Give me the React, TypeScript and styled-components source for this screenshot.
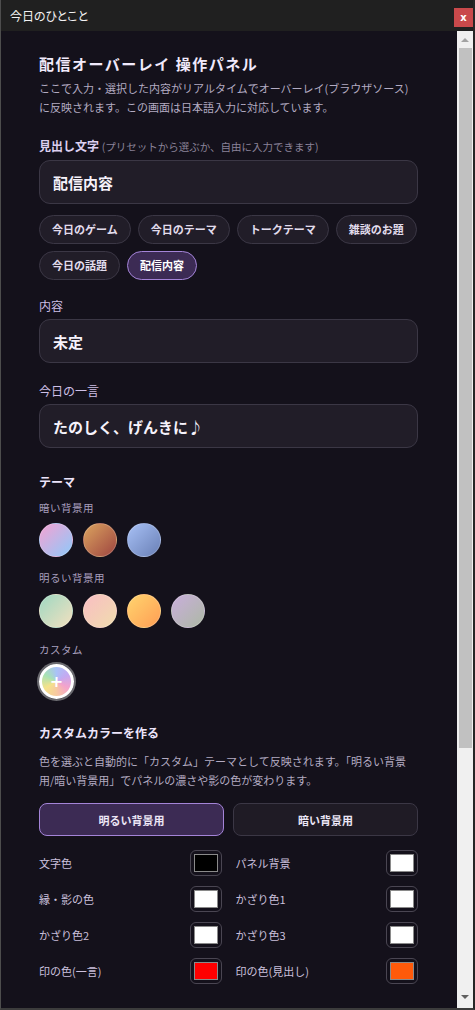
import React from "react";
import styled, { createGlobalStyle } from "styled-components";

const GlobalStyle = createGlobalStyle`
  html, body {
    margin: 0;
    padding: 0;
    background: #14111b;
  }
  body {
    font-family: "Noto Sans CJK JP", "Noto Sans", sans-serif;
  }
  * {
    box-sizing: border-box;
  }
`;

/**
 * Window chrome
 */

const Window = styled.div`
  width: 475px;
  height: 1010px;
  display: flex;
  flex-direction: column;
  background: #14111b;
  border-left: 1px solid #4d4d4d;
  border-right: 2px solid #262626;
  border-bottom: 2px solid #3c3c3c;
  overflow: hidden;
`;

const TitleBar = styled.div`
  height: 31px;
  flex-shrink: 0;
  display: flex;
  justify-content: space-between;
  align-items: flex-start;
  background: #202020;
  padding-left: 9px;
`;

const WindowTitle = styled.span`
  line-height: 31px;
  font-size: 12px;
  color: #f2f2f2;
  font-feature-settings: "palt";
`;

const CloseButton = styled.button`
  margin-top: 8px;
  width: 19px;
  height: 19px;
  padding: 0;
  border: none;
  background: #c9494b;
  color: #fff;
  font-family: "DejaVu Sans", sans-serif;
  font-size: 10px;
  font-weight: 700;
  line-height: 19px;
`;

const Body = styled.div`
  flex: 1;
  min-height: 0;
  display: flex;
`;

const Content = styled.main`
  flex: 1;
  overflow: hidden;
  padding: 22px 39px 0 38px;
`;

const ScrollTrack = styled.div`
  width: 16px;
  flex-shrink: 0;
  display: flex;
  flex-direction: column;
  background: #f0f0f0;
`;

const ScrollArrow = styled.div<{ $down?: boolean; $dim?: boolean }>`
  height: 17px;
  display: flex;
  align-items: center;
  justify-content: center;

  &::before {
    content: "";
    border-left: 4px solid transparent;
    border-right: 4px solid transparent;
    ${({ $down, $dim }) =>
      $down
        ? `border-top: 4px solid ${$dim ? "#a3a3a3" : "#606060"};`
        : `border-bottom: 4px solid ${$dim ? "#a3a3a3" : "#606060"};`}
  }
`;

const ScrollThumb = styled.div`
  height: 700px;
  margin: 0 1px 0 2px;
  background: #c1c1c1;
`;

const ScrollSpacer = styled.div<{ $size?: number }>`
  flex: ${({ $size }) => ($size ? `0 0 ${$size}px` : "1")};
`;

/**
 * Panel parts
 */

const Heading = styled.h1`
  margin: 0;
  font-size: 15px;
  line-height: 22px;
  font-weight: 700;
  letter-spacing: 1.5px;
  color: #f1eafc;
`;

const Lead = styled.p<{ $top?: number }>`
  margin: ${({ $top }) => $top ?? 4}px 0 0;
  font-size: 11px;
  line-height: 19px;
  color: #b3abc2;
`;

const FieldLabel = styled.div<{ $top: number; $strong?: boolean }>`
  margin: ${({ $top }) => $top}px 0 4px;
  font-size: 12px;
  line-height: 18px;
  font-weight: ${({ $strong }) => ($strong ? 700 : 400)};
  color: ${({ $strong }) => ($strong ? "#dccff0" : "#cdbfe6")};
`;

const Hint = styled.span`
  font-size: 10.5px;
  font-weight: 400;
  color: #8a8298;
`;

const TextInput = styled.input`
  display: block;
  width: 100%;
  height: 44px;
  padding: 0 13px;
  border-radius: 11px;
  border: 1px solid #3b3745;
  background: #211d28;
  color: #f6f2fb;
  font-family: "Noto Sans CJK JP", "Noto Sans", sans-serif;
  font-size: 15px;
  font-weight: 700;
  outline: none;
`;

const ChipRow = styled.div`
  display: flex;
  flex-wrap: wrap;
  gap: 7px;
  margin-top: 11px;
`;

const Chip = styled.button<{ $active?: boolean }>`
  height: 29px;
  padding: 0 12px;
  border-radius: 999px;
  border: 1px solid ${({ $active }) => ($active ? "#a484d8" : "#3b3745")};
  background: ${({ $active }) => ($active ? "#3c2b54" : "#211d28")};
  color: ${({ $active }) => ($active ? "#ffffff" : "#e2dcec")};
  font-family: "Noto Sans CJK JP", "Noto Sans", sans-serif;
  font-size: 11px;
  font-weight: 700;
  line-height: 27px;
`;

const SectionTitle = styled.h2<{ $top: number }>`
  margin: ${({ $top }) => $top}px 0 0;
  font-size: 12px;
  line-height: 18px;
  font-weight: 700;
  color: #ece4fa;
`;

const SubLabel = styled.div<{ $top: number; $bottom: number }>`
  margin: ${({ $top }) => $top}px 0 ${({ $bottom }) => $bottom}px;
  font-size: 10.5px;
  line-height: 18px;
  letter-spacing: 0.5px;
  color: #a79fbd;
`;

const SwatchRow = styled.div`
  display: flex;
  gap: 10px;
`;

const ThemeCircle = styled.button<{ $from: string; $to: string }>`
  width: 34px;
  height: 34px;
  padding: 0;
  border-radius: 50%;
  border: 1px solid rgba(255, 255, 255, 0.18);
  background: linear-gradient(135deg, ${({ $from }) => $from}, ${({ $to }) => $to});
`;

const CustomCircle = styled.button`
  width: 35px;
  height: 35px;
  padding: 0;
  border-radius: 50%;
  border: 3px solid #ffffff;
  box-shadow: 0 0 0 2px #6a6a6f;
  background: conic-gradient(
    from 0deg,
    #a9c2f7,
    #c4a9f1,
    #f4a3cb,
    #f7c9a0,
    #f4e28a,
    #a8e2b4,
    #a9c2f7
  );
  color: #fff;
  font-family: "DejaVu Sans", sans-serif;
  font-size: 16px;
  font-weight: 700;
  line-height: 27px;
`;

const ToggleRow = styled.div`
  display: grid;
  grid-template-columns: 1fr 1fr;
  gap: 9px;
  margin-top: 13px;
`;

const Toggle = styled.button<{ $active?: boolean }>`
  height: 33px;
  border-radius: 8px;
  border: 1px solid ${({ $active }) => ($active ? "#a484d8" : "#3b3745")};
  background: ${({ $active }) => ($active ? "#3c2b54" : "#1f1b25")};
  color: #ece6f6;
  font-family: "Noto Sans CJK JP", "Noto Sans", sans-serif;
  font-size: 11px;
  font-weight: 700;
`;

const ColorGrid = styled.div`
  display: grid;
  grid-template-columns: 1fr 1fr;
  column-gap: 14px;
  row-gap: 10px;
  margin-top: 14px;
`;

const ColorItem = styled.label`
  display: flex;
  align-items: center;
  justify-content: space-between;
  font-size: 11px;
  color: #cbc0dd;
`;

const ColorWell = styled.span`
  width: 32px;
  height: 26px;
  padding: 3px;
  border-radius: 6px;
  border: 1px solid #4a4652;
  display: flex;
`;

const ColorFill = styled.span<{ $color: string }>`
  flex: 1;
  border: 1px solid #8a8a8a;
  background: ${({ $color }) => $color};
`;

const presets = [
  "今日のゲーム",
  "今日のテーマ",
  "トークテーマ",
  "雑談のお題",
  "今日の話題",
  "配信内容",
];

const darkThemes = [
  { from: "#f4a2d2", to: "#8fc9fa" },
  { from: "#dba35f", to: "#9e4540" },
  { from: "#a7c0f5", to: "#6a80b6" },
];

const lightThemes = [
  { from: "#9fd8c2", to: "#f2e0bf" },
  { from: "#f9bec3", to: "#f0dcae" },
  { from: "#ffd46e", to: "#ff9e54" },
  { from: "#c9aedb", to: "#adb9a5" },
];

const colors = [
  { label: "文字色", value: "#000000" },
  { label: "パネル背景", value: "#ffffff" },
  { label: "縁・影の色", value: "#ffffff" },
  { label: "かざり色1", value: "#ffffff" },
  { label: "かざり色2", value: "#ffffff" },
  { label: "かざり色3", value: "#ffffff" },
  { label: "印の色(一言)", value: "#ff0000" },
  { label: "印の色(見出し)", value: "#ff5a0a" },
];

const App: React.FC = () => {
  return (
    <>
      <GlobalStyle />
      <Window>
        <TitleBar>
          <WindowTitle>今日のひとこと</WindowTitle>
          <CloseButton>x</CloseButton>
        </TitleBar>
        <Body>
          <Content>
            <Heading>配信オーバーレイ 操作パネル</Heading>
            <Lead>
              ここで入力・選択した内容がリアルタイムでオーバーレイ(ブラウザソース)に反映されます。この画面は日本語入力に対応しています。
            </Lead>

            <FieldLabel $top={20} $strong>
              見出し文字 <Hint>(プリセットから選ぶか、自由に入力できます)</Hint>
            </FieldLabel>
            <TextInput readOnly value="配信内容" />
            <ChipRow>
              {presets.map((p) => (
                <Chip key={p} $active={p === "配信内容"}>
                  {p}
                </Chip>
              ))}
            </ChipRow>

            <FieldLabel $top={17}>内容</FieldLabel>
            <TextInput readOnly value="未定" />

            <FieldLabel $top={19}>今日の一言</FieldLabel>
            <TextInput readOnly value="たのしく、げんきに♪" />

            <SectionTitle $top={25}>テーマ</SectionTitle>
            <SubLabel $top={8} $bottom={6}>
              暗い背景用
            </SubLabel>
            <SwatchRow>
              {darkThemes.map((t) => (
                <ThemeCircle key={t.from} $from={t.from} $to={t.to} />
              ))}
            </SwatchRow>
            <SubLabel $top={12} $bottom={7}>
              明るい背景用
            </SubLabel>
            <SwatchRow>
              {lightThemes.map((t) => (
                <ThemeCircle key={t.from} $from={t.from} $to={t.to} />
              ))}
            </SwatchRow>
            <SubLabel $top={13} $bottom={5}>
              カスタム
            </SubLabel>
            <CustomCircle>+</CustomCircle>

            <SectionTitle $top={25}>カスタムカラーを作る</SectionTitle>
            <Lead $top={10}>
              色を選ぶと自動的に「カスタム」テーマとして反映されます。「明るい背景用/暗い背景用」でパネルの濃さや影の色が変わります。
            </Lead>
            <ToggleRow>
              <Toggle $active>明るい背景用</Toggle>
              <Toggle>暗い背景用</Toggle>
            </ToggleRow>

            <ColorGrid>
              {colors.map((c) => (
                <ColorItem key={c.label}>
                  {c.label}
                  <ColorWell>
                    <ColorFill $color={c.value} />
                  </ColorWell>
                </ColorItem>
              ))}
            </ColorGrid>
          </Content>
          <ScrollTrack>
            <ScrollArrow $dim />
            <ScrollThumb />
            <ScrollSpacer />
            <ScrollArrow $down />
            <ScrollSpacer $size={3} />
          </ScrollTrack>
        </Body>
      </Window>
    </>
  );
};

export default App;
